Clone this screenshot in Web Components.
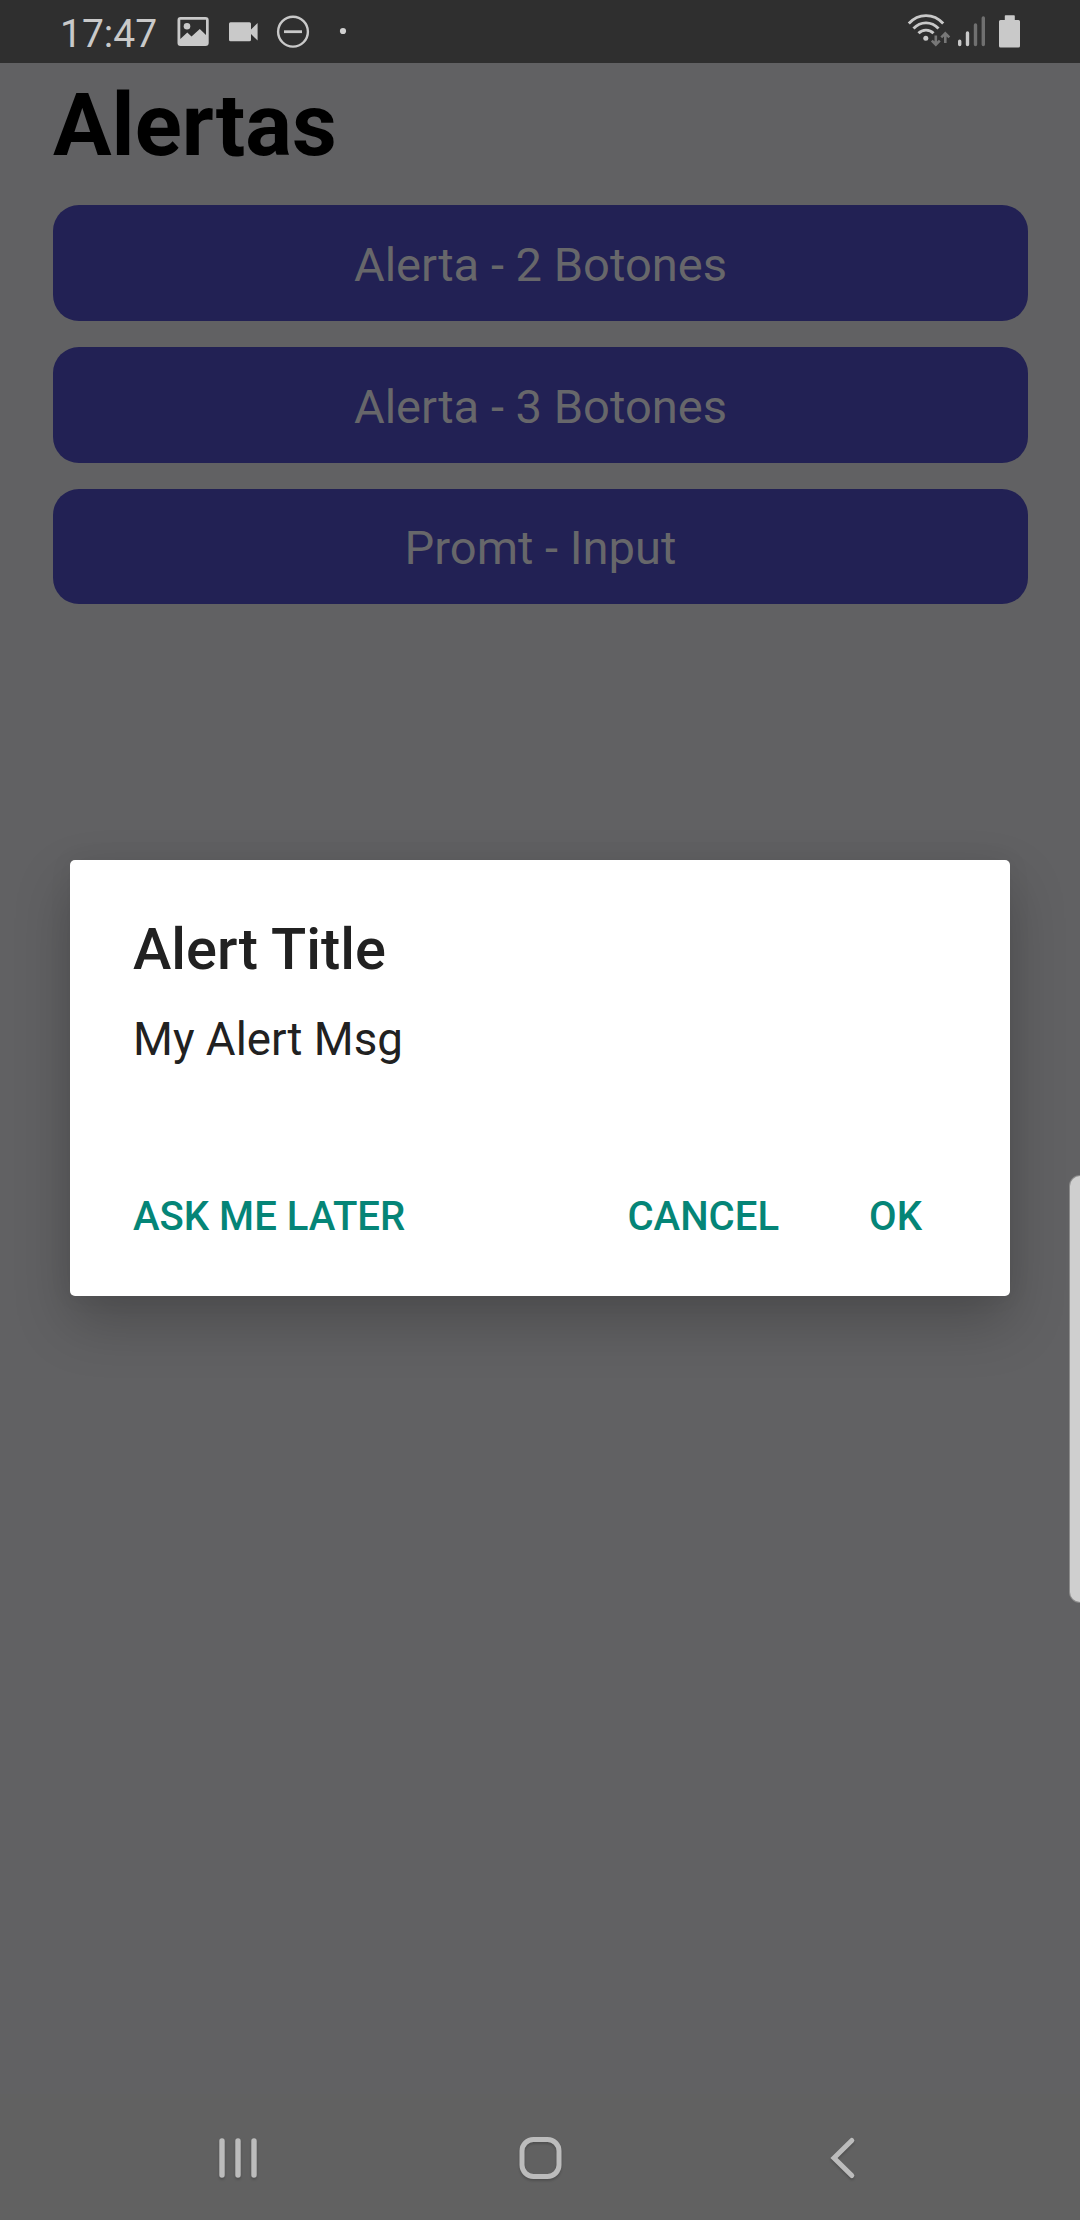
<!DOCTYPE html>
<html lang="es">
<head>
<meta charset="utf-8">
<title>Alertas</title>
<style>
html,body{margin:0;height:100%;overflow:hidden;background:#616163}
body{font-family:Roboto,"Liberation Sans",sans-serif}
</style>
</head>
<body>
<phone-screen>
  <status-bar slot="status" time="17:47"></status-bar>
  <page-title>Alertas</page-title>
  <action-button>Alerta - 2 Botones</action-button>
  <action-button>Alerta - 3 Botones</action-button>
  <action-button class="last">Promt - Input</action-button>
  <alert-dialog slot="overlay">
    <span slot="title">Alert Title</span>
    <span slot="message">My Alert Msg</span>
    <dialog-button slot="neutral">ASK ME LATER</dialog-button>
    <dialog-button slot="actions">CANCEL</dialog-button>
    <dialog-button slot="actions">OK</dialog-button>
  </alert-dialog>
  <edge-handle slot="overlay"></edge-handle>
  <nav-bar slot="nav"></nav-bar>
</phone-screen>
<script>
const define = (name, render) => customElements.define(name, class extends HTMLElement {
  constructor() {
    super();
    this.attachShadow({mode: 'open'}).innerHTML = render(this);
  }
});

define('phone-screen', () => `
<style>
:host{display:flex;flex-direction:column;position:relative;width:1080px;height:2220px;background:#616163;overflow:hidden}
main{flex:1;display:flex;flex-direction:column;gap:26px;padding:0 52px 0 53px}
</style>
<slot name="status"></slot>
<main><slot></slot></main>
<slot name="nav"></slot>
<slot name="overlay"></slot>`);

define('status-bar', el => `
<style>
:host{display:flex;align-items:center;box-sizing:border-box;height:63px;padding:0 58px 0 60px;background:#2f2f2f;color:#c9c9c9}
time{width:117px;font-size:39px;line-height:46px;padding-top:4px;white-space:nowrap}
svg{display:block;height:63px;flex:none}
.gap{flex:1}
</style>
<time>${el.getAttribute('time')}</time>
<svg width="32" viewBox="177 0 32 63"><path fill="#c9c9c9" fill-rule="evenodd" d="M180.500 17H205.500Q208.700 17 208.700 20V43Q208.700 46 205.500 46H180.500Q177.500 46 177.500 43V20Q177.500 17 180.500 17ZM180.300 19.800V39L187.300 32.500L191.500 36.500L199.800 29L206 35V19.800Z"/><circle cx="187" cy="26.300" r="3.300" fill="#c9c9c9"/></svg>
<svg width="49" viewBox="209 0 49 63"><path fill="#c9c9c9" d="M230.500 22.300H249.500Q251 22.300 251 23.800V29.500L257.600 23V40.500L251 34V39.700Q251 41.200 249.500 41.200H230.500Q229 41.200 229 39.700V23.800Q229 22.300 230.500 22.300Z"/></svg>
<svg width="52" viewBox="258 0 52 63"><g fill="none" stroke="#c9c9c9" stroke-width="2.400"><circle cx="293" cy="31.700" r="14.900"/><path d="M284 31.700H302" stroke-width="2.800"/></g></svg>
<svg width="40" viewBox="310 0 40 63"><circle cx="343" cy="31" r="3.100" fill="#d0d0d0"/></svg>
<span class="gap"></span>
<svg width="50" viewBox="902.500 0 50 63"><g fill="none" stroke="#c9c9c9" stroke-width="2.900"><path d="M908.300 23.500C918 13 933 13 942.700 23.500"/><path d="M913 28.600C920 21 931 21 938 28.600"/><path d="M918 33.300C922 29 929 29 933 33.300"/></g><circle cx="925.300" cy="38.300" r="2.500" fill="#c9c9c9"/><g fill="none" stroke="#777" stroke-width="2.600"><path d="M935.300 35.500V44.500M931.300 40.700L935.300 44.700L939.300 40.700"/><path d="M944.800 43V33.300M940.800 37.300L944.800 33.300L948.800 37.300"/></g></svg>
<svg width="38" viewBox="953 0 38 63"><g stroke-width="3.400" stroke-linecap="round"><path stroke="#c9c9c9" d="M959.700 41.300V44.500M967.500 33V44.500"/><path stroke="#707070" d="M975.500 25V44.500M983.300 18V44.500"/></g></svg>
<svg width="31" viewBox="991 0 31 63"><path fill="#c9c9c9" d="M1005.500 15.300H1014Q1014.800 15.300 1014.800 16V20H1018.500Q1020 20 1020 21.500V46Q1020 47.600 1018.500 47.600H1000.500Q999 47.600 999 46V21.500Q999 20 1000.500 20H1004.800V16Q1004.800 15.300 1005.500 15.300Z"/></svg>`);

define('page-title', () => `
<style>
:host{display:block;margin-bottom:-9px;height:125px;color:#000}
h1{margin:0;font-size:87.200px;font-weight:700;line-height:125px}
</style><h1><slot></slot></h1>`);

define('action-button', () => `
<style>
:host{display:flex;height:116px}
:host(.last){height:115px}
button{flex:1;margin:0;border:0;border-radius:26px;padding:2px 0 0;background:#222154;color:#67676a;font:400 47.100px Roboto,"Liberation Sans",sans-serif}
</style><button><slot></slot></button>`);

define('alert-dialog', () => `
<style>
:host{position:absolute;left:70px;top:860px;width:940px;height:436px;box-sizing:border-box;display:flex;flex-direction:column;padding:55px 63px 0;border-radius:5px;background:#fff;color:#212121;box-shadow:0 26px 56px rgba(0,0,0,.22),0 0 24px rgba(0,0,0,.06)}
h2{margin:0;font-size:57.750px;font-weight:500;line-height:69px}
p{margin:26px 0 0;font-size:45.700px;line-height:60px}
footer{display:flex;align-items:center;margin-top:97px;height:100px;padding-right:25px}
.actions{display:flex;gap:90px;margin-left:auto}
</style>
<h2><slot name="title"></slot></h2>
<p><slot name="message"></slot></p>
<footer><slot name="neutral"></slot><div class="actions"><slot name="actions"></slot></div></footer>`);

define('dialog-button', () => `
<style>
:host{display:block}
button{display:block;margin:0;border:0;padding:0;background:none;color:#058577;font:500 40.100px/48px Roboto,"Liberation Sans",sans-serif;white-space:nowrap}
</style><button><slot></slot></button>`);

define('edge-handle', () => `
<style>
:host{position:absolute;right:-10px;top:1176px;width:20px;height:426px;border-radius:13px;background:#cfcfcf;box-shadow:0 0 0 1px #8b8b8b}
</style>`);

define('nav-bar', () => `
<style>
:host{display:flex;box-sizing:border-box;height:126px;background:#616161;align-items:center;justify-content:space-between;padding:2px 212px 0 213px}
svg{display:block;filter:drop-shadow(0 2px 1px rgba(0,0,0,.18))}
</style>
<svg width="50" height="50" viewBox="213 2133 50 50"><path d="M222 2141V2175M238 2141V2175M254 2141V2175" stroke="#bcbcbc" stroke-width="5.400" stroke-linecap="round"/></svg>
<svg width="50" height="50" viewBox="515.500 2133 50 50"><rect x="521.500" y="2139.500" width="37" height="37" rx="11.500" fill="none" stroke="#bcbcbc" stroke-width="5"/></svg>
<svg width="50" height="50" viewBox="818 2133 50 50"><path d="M851.800 2140.500L834 2158L851.800 2175.500" fill="none" stroke="#bcbcbc" stroke-width="5" stroke-linecap="round"/></svg>`);
</script>
</body>
</html>
